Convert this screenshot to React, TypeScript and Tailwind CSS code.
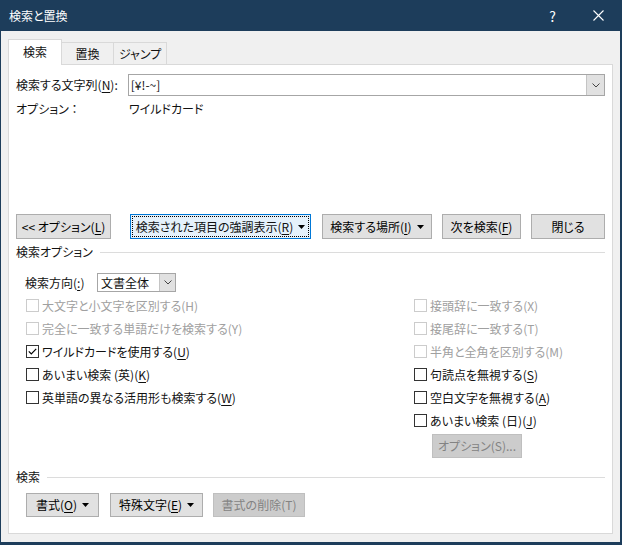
import React from "react";

function U({ children }: { children: React.ReactNode }) {
  return <span className="underline underline-offset-[2px]">{children}</span>;
}

function Tri() {
  return (
    <svg width="7" height="4" viewBox="0 0 7 4" className="ml-[5px]">
      <path d="M0 0h7L3.5 4z" fill="#000" />
    </svg>
  );
}

function Chevron() {
  return (
    <svg width="8" height="5" viewBox="0 0 8 5">
      <path d="M0.5 0.5L4 4L7.5 0.5" fill="none" stroke="#444" strokeWidth="1" />
    </svg>
  );
}

function Btn({
  children,
  className,
  disabled,
}: {
  children: React.ReactNode;
  className: string;
  disabled?: boolean;
}) {
  return (
    <div
      className={`flex items-center justify-center border ${
        disabled
          ? "border-[#bfbfbf] bg-[#cccccc] text-[#838383]"
          : "border-[#adadad] bg-[#e1e1e1] text-black"
      } ${className}`}
    >
      {children}
    </div>
  );
}

function Check({
  label,
  checked,
  disabled,
}: {
  label: React.ReactNode;
  checked?: boolean;
  disabled?: boolean;
}) {
  return (
    <div className="flex items-center h-[23px]">
      <span
        className={`w-[13px] h-[13px] border bg-white flex items-center justify-center ${
          disabled ? "border-[#cccccc]" : "border-[#333333]"
        }`}
      >
        {checked && (
          <svg width="9" height="7" viewBox="0 0 9 7">
            <path d="M0.8 3.3L3.3 5.8L8.2 0.8" fill="none" stroke="#000" strokeWidth="1.2" />
          </svg>
        )}
      </span>
      <span className={`ml-[3px] ${disabled ? "text-[#a0a0a0]" : "text-[#111]"}`}>{label}</span>
    </div>
  );
}

export default function App() {
  return (
    <div className="w-[622px] h-[545px] bg-[#1d3d5b] flex flex-col font-['Noto_Sans_CJK_JP','Noto_Sans',sans-serif] text-[12px] leading-[16px] text-[#111] [font-feature-settings:'palt']">
      {/* title bar */}
      <div className="h-[31px] flex items-center text-white shrink-0">
        <span className="ml-[9px]">検索と置換</span>
        <span className="ml-auto mr-[37px] text-[14px]">?</span>
        <svg width="11" height="11" viewBox="0 0 11 11" className="mr-[18px]">
          <path d="M0.5 0.5L10.5 10.5M10.5 0.5L0.5 10.5" stroke="#fff" strokeWidth="1.1" />
        </svg>
      </div>

      <div className="flex-1 ml-[1px] mr-[2px] mb-[3px] bg-[#f0f0f0] pl-[7px] pt-[8px]">
        {/* tabs */}
        <div className="flex items-end h-[25px]">
          <div className="relative z-10 w-[54px] h-[26px] -mb-[1px] bg-white border border-b-0 border-[#d9d9d9] flex items-center justify-center pb-[2px]">
            検索
          </div>
          <div className="w-[52px] h-[22px] border border-l-0 border-b-0 border-[#d9d9d9] flex items-center justify-center">
            置換
          </div>
          <div className="w-[53px] h-[22px] border border-l-0 border-b-0 border-[#d9d9d9] flex items-center justify-center">
            ジャンプ
          </div>
        </div>

        {/* panel */}
        <div className="w-[605px] h-[470px] bg-white border border-[#d9d9d9] px-[7px] pt-[9px] flex flex-col">
          <div className="flex items-center h-[22px]">
            <span className="w-[112px]">
              検索する文字列(<U>N</U>):
            </span>
            <div className="w-[478px] h-[22px] border border-[#a6a6a6] flex items-center">
              <span className="ml-[2px] flex-1">[¥!-~]</span>
              <div className="w-[18px] h-[20px] bg-[#e1e1e1] border-l border-[#c4c4c4] flex items-center justify-center">
                <Chevron />
              </div>
            </div>
          </div>

          <div className="flex items-center h-[18px] mt-[4px]">
            <span className="w-[113px]">オプション ：</span>
            <span>ワイルドカード</span>
          </div>

          {/* buttons */}
          <div className="flex items-center h-[25px] mt-[96px]">
            <Btn className="w-[95px] h-[25px]">
              &lt;&lt; オプション(<U>L</U>)
            </Btn>
            <div className="ml-[19px] w-[181px] h-[25px] border border-[#0078d7] bg-[#e5f1fb] p-[1px]">
              <div className="w-full h-full border border-dotted border-black flex items-center justify-center">
                検索された項目の強調表示(<U>R</U>)
                <Tri />
              </div>
            </div>
            <Btn className="ml-[11px] w-[110px] h-[25px]">
              検索する場所(<U>I</U>)
              <Tri />
            </Btn>
            <Btn className="ml-[10px] w-[79px] h-[25px]">
              次を検索(<U>F</U>)
            </Btn>
            <Btn className="ml-[10px] w-[74px] h-[25px]">閉じる</Btn>
          </div>

          {/* 検索オプション */}
          <div className="flex items-center h-[16px] mt-[5px]">
            <span>検索オプション</span>
            <div className="flex-1 h-px bg-[#dcdcdc] ml-[7px]" />
          </div>

          <div className="flex items-center h-[19px] mt-[13px] pl-[9px]">
            <span className="w-[72px]">
              検索方向(<U>:</U>)
            </span>
            <div className="w-[79px] h-[19px] border border-[#a6a6a6] flex items-center">
              <span className="ml-[3px] flex-1">文書全体</span>
              <div className="w-[16px] h-[17px] bg-[#e1e1e1] border-l border-[#c4c4c4] flex items-center justify-center">
                <Chevron />
              </div>
            </div>
          </div>

          {/* checkbox columns */}
          <div className="flex justify-between mt-[2px] pl-[10px]">
            <div className="flex flex-col">
              <Check disabled label="大文字と小文字を区別する(H)" />
              <Check disabled label="完全に一致する単語だけを検索する(Y)" />
              <Check
                checked
                label={
                  <>
                    ワイルドカードを使用する(<U>U</U>)
                  </>
                }
              />
              <Check
                label={
                  <>
                    あいまい検索 (英)(<U>K</U>)
                  </>
                }
              />
              <Check
                label={
                  <>
                    英単語の異なる活用形も検索する(<U>W</U>)
                  </>
                }
              />
            </div>
            <div className="flex flex-col w-[191px]">
              <Check disabled label="接頭辞に一致する(X)" />
              <Check disabled label="接尾辞に一致する(T)" />
              <Check disabled label="半角と全角を区別する(M)" />
              <Check
                label={
                  <>
                    句読点を無視する(<U>S</U>)
                  </>
                }
              />
              <Check
                label={
                  <>
                    空白文字を無視する(<U>A</U>)
                  </>
                }
              />
              <Check
                label={
                  <>
                    あいまい検索 (日)(<U>J</U>)
                  </>
                }
              />
              <Btn disabled className="ml-[18px] mt-[2px] w-[90px] h-[24px]">
                オプション(S)...
              </Btn>
            </div>
          </div>

          {/* 検索 */}
          <div className="flex items-center h-[16px] mt-[11px]">
            <span>検索</span>
            <div className="flex-1 h-px bg-[#dcdcdc] ml-[7px]" />
          </div>

          <div className="flex items-center mt-[8px] pl-[10px]">
            <Btn className="w-[73px] h-[24px]">
              書式(<U>O</U>)
              <Tri />
            </Btn>
            <Btn className="ml-[11px] w-[93px] h-[24px]">
              特殊文字(<U>E</U>)
              <Tri />
            </Btn>
            <Btn disabled className="ml-[10px] w-[92px] h-[24px]">
              書式の削除(T)
            </Btn>
          </div>
        </div>
      </div>
    </div>
  );
}
